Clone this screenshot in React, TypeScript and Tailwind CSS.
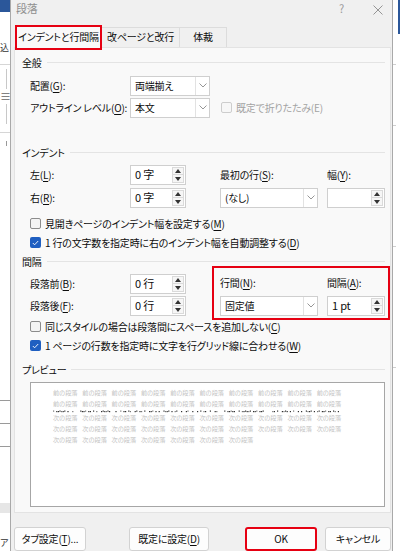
import React from "react";

const RED = "border-[#e60012]";

function U({ c }: { c: string }) {
  return <span className="underline decoration-1 underline-offset-[2px]">{c}</span>;
}

function Chevron() {
  return (
    <svg width="8" height="5" viewBox="0 0 8 5" className="block">
      <polyline points="0.5,0.5 4,4 7.5,0.5" fill="none" stroke="#8a8a8a" strokeWidth="0.9" />
    </svg>
  );
}

function Select({ value, w }: { value: string; w: string }) {
  return (
    <div className={`flex h-[20px] ${w} items-center border border-[#cfcfcf] bg-white`}>
      <span className="flex-1 pl-[4px] leading-none">{value}</span>
      <div className="flex h-full w-[14px] items-center justify-center border-l border-[#e2e2e2]">
        <Chevron />
      </div>
    </div>
  );
}

function Spin({ value, w }: { value: string; w: string }) {
  return (
    <div className={`flex h-[20px] ${w} border border-[#cfcfcf] bg-white`}>
      <span className="flex flex-1 items-center pl-[4px] text-[11px] leading-none">{value}</span>
      <div className="my-[1px] mr-[1px] flex w-[12px] flex-col border border-[#dadada] bg-[#f6f6f6]">
        <div className="flex flex-1 items-center justify-center border-b border-[#dadada]">
          <svg width="6" height="4" viewBox="0 0 6 4" className="block">
            <polygon points="3,0 6,4 0,4" fill="#333" />
          </svg>
        </div>
        <div className="flex flex-1 items-center justify-center">
          <svg width="6" height="4" viewBox="0 0 6 4" className="block">
            <polygon points="0,0 6,0 3,4" fill="#333" />
          </svg>
        </div>
      </div>
    </div>
  );
}

function Check({ checked, disabled }: { checked?: boolean; disabled?: boolean }) {
  if (checked) {
    return (
      <div className="flex h-[11px] w-[11px] items-center justify-center rounded-[2px] bg-[#1f5fc1]">
        <svg width="7" height="6" viewBox="0 0 7 6" className="block">
          <polyline points="0.8,3 2.6,4.8 6.2,1" fill="none" stroke="#fff" strokeWidth="0.9" />
        </svg>
      </div>
    );
  }
  return (
    <div
      className={`h-[11px] w-[11px] rounded-[2px] border ${
        disabled ? "border-[#cdcdcd] bg-[#f7f7f7]" : "border-[#8c8c8c] bg-[#f4f4f4]"
      }`}
    />
  );
}

function Section({ title }: { title: string }) {
  return (
    <div className="flex h-[14px] items-center pl-[7px] pr-[5px]">
      <span className="leading-none">{title}</span>
      <div className="ml-[5px] h-px flex-1 bg-[#e4e4e4]" />
    </div>
  );
}

function CheckRow({ children, checked }: { children: React.ReactNode; checked?: boolean }) {
  return (
    <div className="flex h-[14px] items-center pl-[15px]">
      <Check checked={checked} />
      <span className="ml-[4px] leading-none">{children}</span>
    </div>
  );
}

function Label({ children }: { children: React.ReactNode }) {
  return <div className="flex w-[115px] items-center pl-[15px] leading-none">{children}</div>;
}

function PreviewDots() {
  // the current paragraph squeezed to 1pt line spacing
  const dots: number[] = [];
  let s = 7;
  for (let x = 0; x < 292; x += 1.6) {
    s = (s * 1103515245 + 12345) % 2147483648;
    const r = s / 2147483648;
    if (r > 0.45) dots.push(x);
  }
  return (
    <svg width="292" height="3" viewBox="0 0 292 3" className="block">
      {dots.map((x, i) => (
        <rect key={i} x={x} y={i % 3 === 0 ? 0.5 : 1} width="1.2" height="1.2" fill={i % 4 === 0 ? "#777" : "#333"} />
      ))}
    </svg>
  );
}

function PreviewRow({ word, count }: { word: string; count: number }) {
  return (
    <div className="flex h-[11px] items-center">
      {Array.from({ length: count }).map((_, i) => (
        <span key={i} className="w-[29.3px] text-[6.2px] leading-none tracking-normal text-[#c3c3c3]">
          {word}
        </span>
      ))}
    </div>
  );
}

function Button({ children, w, red }: { children: React.ReactNode; w: string; red?: boolean }) {
  return (
    <div
      className={`flex h-[24px] ${w} items-center justify-center rounded-[3px] bg-[#fdfdfd] leading-none ${
        red ? `border-2 ${RED}` : "border border-[#d2d2d2]"
      }`}
    >
      {children}
    </div>
  );
}

export default function App() {
  return (
    <div className="flex h-[551px] w-[400px] overflow-hidden whitespace-nowrap bg-white font-['Noto_Sans_CJK_JP',sans-serif] text-[10px] tracking-[-0.2px] text-[#0d0d0d] [font-feature-settings:'palt']">
      {/* word window behind, left */}
      <div className="flex w-[10px] flex-col overflow-hidden bg-white">
        <div className="h-[12px] bg-[#2b579a]" />
        <div className="h-[30px]" />
        <div className="text-[9px] leading-[12px] text-[#333]">込</div>
        <div className="mt-[10px] h-px bg-[#d6d6d6]" />
        <div className="ml-[6px] mt-[4px] h-[20px] w-px bg-[#c8c8c8]" />
        <div className="mt-[3px] text-[11px] leading-[8px] text-[#666]">≡</div>
        <div className="ml-[6px] mt-[4px] h-[20px] w-px bg-[#c8c8c8]" />
        <div className="mt-[8px] h-px bg-[#d6d6d6]" />
        <div className="ml-[6px] mt-[8px] h-[5px] w-px bg-[#999]" />
        <div className="mt-[254px] h-px bg-[#9a9a9a]" />
        <div className="mt-[22px] h-px bg-[#9a9a9a]" />
        <div className="mt-[22px] h-px bg-[#9a9a9a]" />
        <div className="mt-[56px] h-[10px] bg-[#e6e6e6]" />
        <div className="mt-[24px] text-[9px] leading-[12px] text-[#333]">ア</div>
      </div>

      {/* dialog */}
      <div className="flex w-[383px] flex-col border-l border-r border-[#a9a9a9] bg-[#f0f0f0] pl-[3px] pr-[1px]">
        {/* title bar */}
        <div className="flex h-[25px] items-start pt-[2px]">
          <span className="ml-[2px] text-[11px] leading-[13px] text-[#8f8f8f]">段落</span>
          <span className="ml-auto text-[11px] leading-[13px] text-[#9a9a9a]">?</span>
          <div className="ml-[29px] mr-[8px] mt-[3px]">
            <svg width="10" height="10" viewBox="0 0 10 10" className="block">
              <path d="M0.5 0.5 L9.5 9.5 M9.5 0.5 L0.5 9.5" stroke="#8a8a8a" strokeWidth="0.9" />
            </svg>
          </div>
        </div>

        {/* tabs */}
        <div className="flex h-[22px] items-start pl-[1px]">
          <div className={`relative z-10 flex h-[25px] w-[87px] items-center justify-center border-2 ${RED} bg-[#f9f9f9] leading-none`}>
            インデントと行間隔
          </div>
          <div className="mt-[2px] flex h-[20px] w-[78px] items-center justify-center border-r border-t border-[#dcdcdc] leading-none">
            改ページと改行
          </div>
          <div className="mt-[2px] flex h-[20px] w-[47px] items-center justify-center border-r border-t border-[#dcdcdc] leading-none">
            体裁
          </div>
        </div>

        {/* panel */}
        <div className="flex h-[468px] flex-col border border-[#e3e3e3] bg-[#f9f9f9] pt-[8px]">
          <Section title="全般" />
          <div className="mt-[6px] flex h-[20px]">
            <Label>
              配置(<U c="G" />):
            </Label>
            <Select value="両端揃え" w="w-[80px]" />
          </div>
          <div className="mt-[2px] flex h-[20px]">
            <Label>
              アウトライン レベル(<U c="O" />):
            </Label>
            <Select value="本文" w="w-[80px]" />
            <div className="ml-[11px] flex items-center">
              <Check disabled />
              <span className="ml-[4px] leading-none text-[#a3a3a3]">既定で折りたたみ(E)</span>
            </div>
          </div>

          <div className="mt-[28px]">
            <Section title="インデント" />
          </div>
          <div className="mt-[5px] flex h-[20px]">
            <Label>
              左(<U c="L" />):
            </Label>
            <Spin value="0 字" w="w-[56px]" />
            <div className="ml-[34px] flex w-[107px] items-center leading-none">
              最初の行(<U c="S" />):
            </div>
            <div className="flex items-center leading-none">
              幅(<U c="Y" />):
            </div>
          </div>
          <div className="mt-[3px] flex h-[20px]">
            <Label>
              右(<U c="R" />):
            </Label>
            <Spin value="0 字" w="w-[56px]" />
            <div className="ml-[34px]">
              <Select value="(なし)" w="w-[98px]" />
            </div>
            <div className="ml-[9px]">
              <Spin value="" w="w-[58px]" />
            </div>
          </div>
          <div className="mt-[9px]">
            <CheckRow>
              見開きページのインデント幅を設定する(<U c="M" />)
            </CheckRow>
          </div>
          <div className="mt-[5px]">
            <CheckRow checked>
              1 行の文字数を指定時に右のインデント幅を自動調整する(<U c="D" />)
            </CheckRow>
          </div>

          <div className="mt-[5px]">
            <Section title="間隔" />
          </div>
          <div className="-mt-[3px] flex">
            <div className="flex flex-col pt-[8px]">
              <div className="flex h-[20px]">
                <Label>
                  段落前(<U c="B" />):
                </Label>
                <Spin value="0 行" w="w-[56px]" />
              </div>
              <div className="mt-[2px] flex h-[20px]">
                <Label>
                  段落後(<U c="F" />):
                </Label>
                <Spin value="0 行" w="w-[56px]" />
              </div>
            </div>
            <div className={`ml-[26px] flex h-[54px] w-[180px] border-2 ${RED} pl-[6px] pt-[8px]`}>
              <div className="flex w-[107px] flex-col">
                <div className="flex h-[14px] items-center leading-none">
                  行間(<U c="N" />):
                </div>
                <div className="mt-[6px]">
                  <Select value="固定値" w="w-[98px]" />
                </div>
              </div>
              <div className="flex flex-col">
                <div className="flex h-[14px] items-center leading-none">
                  間隔(<U c="A" />):
                </div>
                <div className="mt-[6px]">
                  <Spin value="1 pt" w="w-[58px]" />
                </div>
              </div>
            </div>
          </div>
          <CheckRow>
            同じスタイルの場合は段落間にスペースを追加しない(<U c="C" />)
          </CheckRow>
          <div className="mt-[5px]">
            <CheckRow checked>
              1 ページの行数を指定時に文字を行グリッド線に合わせる(<U c="W" />)
            </CheckRow>
          </div>

          <div className="mt-[10px]">
            <Section title="プレビュー" />
          </div>
          <div className="ml-[15px] mr-[5px] mt-[5px] h-[125px] border border-[#a6a6a6] bg-white pl-[22px] pt-[5px]">
            <PreviewRow word="前の段落" count={10} />
            <PreviewRow word="前の段落" count={10} />
            <PreviewDots />
            <PreviewRow word="次の段落" count={10} />
            <PreviewRow word="次の段落" count={10} />
            <PreviewRow word="次の段落" count={7} />
          </div>
        </div>

        {/* footer buttons */}
        <div className="mt-[14px] flex">
          <Button w="w-[73px]">
            タブ設定(<U c="T" />)...
          </Button>
          <div className="ml-[43px]">
            <Button w="w-[80px]">
              既定に設定(<U c="D" />)
            </Button>
          </div>
          <div className="ml-[36px]">
            <Button w="w-[72px]" red>
              OK
            </Button>
          </div>
          <div className="ml-[8px]">
            <Button w="w-[66px]">キャンセル</Button>
          </div>
        </div>
      </div>

      {/* word window behind, right */}
      <div className="flex flex-1 flex-col bg-white">
        <div className="ml-auto h-[34px] w-[2px] bg-[#2b579a]" />
        <div className="mt-[30px] h-px w-[3px] bg-[#cfcfcf]" />
        <div className="mt-[60px] h-px w-[3px] bg-[#cfcfcf]" />
        <div className="mt-[120px] h-px w-[3px] bg-[#cfcfcf]" />
        <div className="mt-[120px] h-px w-[3px] bg-[#cfcfcf]" />
      </div>
    </div>
  );
}
